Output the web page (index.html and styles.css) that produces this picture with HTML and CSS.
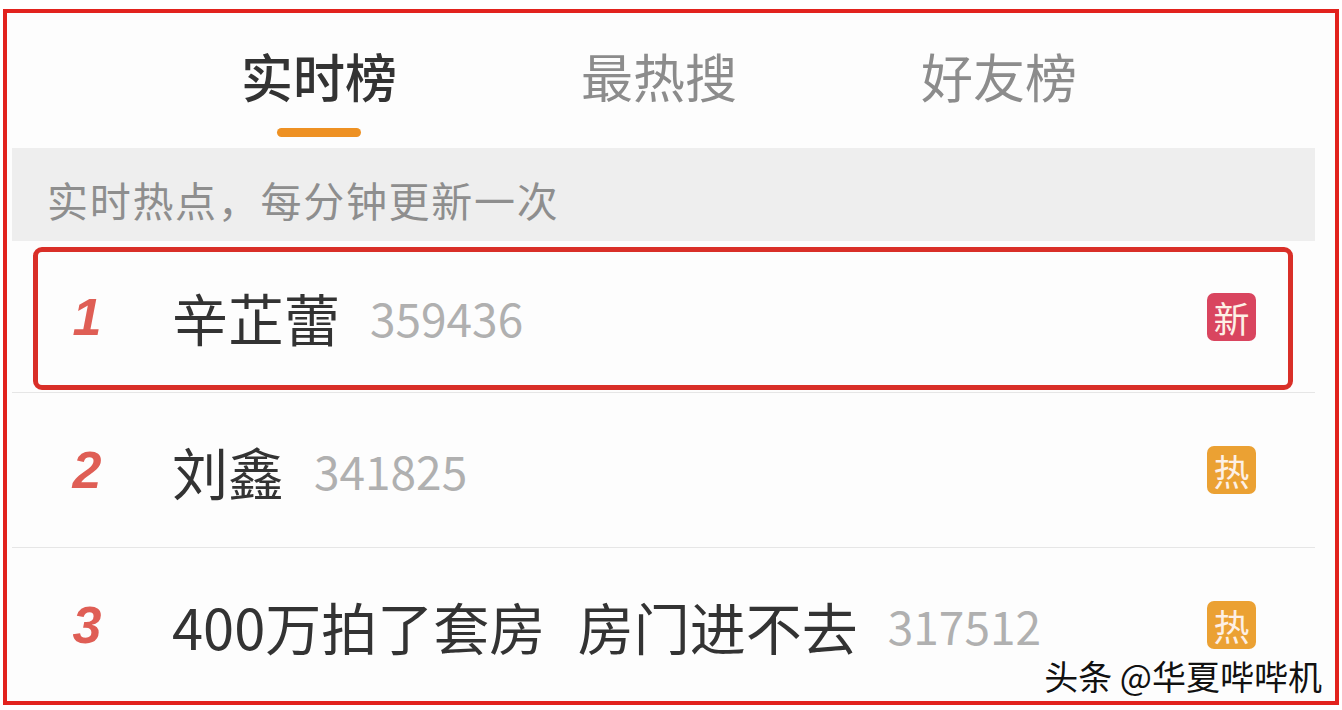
FILE: index.html
```html
<!DOCTYPE html>
<html>
<head>
	<meta charset="utf-8">
	<title>实时榜</title>
	<link rel="stylesheet" href="styles.css">
</head>
<body>
	<div class="frame">
		<div class="tabs">
			<div class="tab active">
				<span class="tab-text">实时榜</span>
				<span class="tab-line"></span>
			</div>
			<div class="tab">
				<span class="tab-text">最热搜</span>
			</div>
			<div class="tab">
				<span class="tab-text">好友榜</span>
			</div>
		</div>
		<div class="notice">实时热点，每分钟更新一次</div>
		<div class="list">
			<div class="row first">
				<span class="rank">1</span>
				<span class="name">辛芷蕾</span>
				<span class="count">359436</span>
				<span class="badge new">新</span>
				<div class="mark"></div>
			</div>
			<div class="row second">
				<span class="rank">2</span>
				<span class="name">刘鑫</span>
				<span class="count">341825</span>
				<span class="badge hot">热</span>
			</div>
			<div class="row third">
				<span class="rank">3</span>
				<span class="name">400万拍了套房 房门进不去</span>
				<span class="count">317512</span>
				<span class="badge hot">热</span>
			</div>
		</div>
		<div class="watermark">头条 @华夏哔哔机</div>
	</div>
</body>
</html>
```

FILE: styles.css
```css
body {
	margin: 0;
	padding: 9px 0 0 3px;
	background: #fff;
	font-family: "Noto Sans CJK SC", "Noto Sans", sans-serif;
}
.frame {
	position: relative;
	box-sizing: border-box;
	width: 1336px;
	height: 696px;
	border: 4px solid #e2221d;
	padding: 0 20px 0 5px;
	background: #fdfdfd;
	overflow: hidden;
}
.tabs {
	display: flex;
	height: 135px;
	padding-left: 137px;
}
.tab {
	width: 340px;
	display: flex;
	flex-direction: column;
	align-items: center;
}
.tab-text {
	margin-top: 33px;
	line-height: 60px;
	font-size: 52px;
	color: #8c8c8c;
}
.tab.active .tab-text {
	color: #333;
	font-weight: 500;
}
.tab-line {
	margin-top: 22px;
	width: 84px;
	height: 9px;
	border-radius: 5px;
	background: #ee9123;
}
.notice {
	height: 93px;
	display: flex;
	align-items: center;
	padding: 8px 0 0 35px;
	box-sizing: border-box;
	background: #eeeeee;
	color: #8e8e8e;
	font-size: 41px;
	letter-spacing: 1.7px;
}
.row {
	position: relative;
	display: flex;
	align-items: center;
	height: 154px;
	padding: 0 59px 0 50px;
	border-bottom: 1px solid #e6e6e6;
}
.row.first {
	height: 151px;
}
.row.third {
	border-bottom: none;
}
.rank {
	width: 50px;
	text-align: center;
	font-family: "Liberation Sans", Arial, sans-serif;
	font-style: italic;
	font-weight: bold;
	font-size: 52px;
	color: #df5e55;
}
.name {
	margin-left: 60px;
	font-size: 56px;
	color: #333;
	word-spacing: 20px;
}
.count {
	margin-left: 30px;
	font-size: 46px;
	color: #b0b0b0;
}
.badge {
	margin-left: auto;
	width: 49px;
	height: 48px;
	border-radius: 7px;
	display: flex;
	align-items: center;
	justify-content: center;
	font-size: 36px;
	color: #fdf0e6;
}
.badge.new {
	background: #d9455f;
}
.badge.hot {
	background: #eba133;
}
.mark {
	position: absolute;
	left: 21px;
	top: 6px;
	width: 1260px;
	height: 143px;
	box-sizing: border-box;
	border: 5px solid #d92f28;
	border-radius: 9px;
}
.watermark {
	position: absolute;
	right: 13px;
	bottom: 5px;
	font-size: 34px;
	line-height: 40px;
	color: #111;
	text-shadow: 1px 1px 0 #fff, -1px -1px 0 #fff, 1px -1px 0 #fff, -1px 1px 0 #fff;
}
```
